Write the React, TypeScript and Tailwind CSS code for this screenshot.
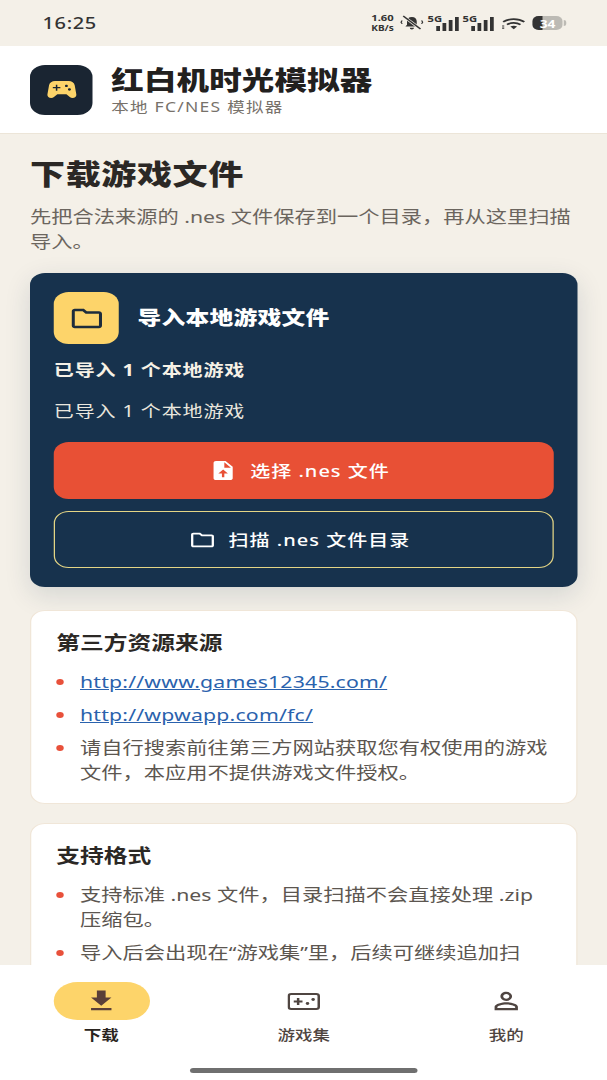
import type { ReactNode } from "react";

function Icon({ d, className }: { d: string; className: string }) {
  return (
    <svg viewBox="0 0 24 24" fill="currentColor" className={className}>
      <path d={d} />
    </svg>
  );
}

const FOLDER =
  "M20 6h-8l-2-2H4c-1.1 0-1.99.9-1.99 2L2 18c0 1.1.9 2 2 2h16c1.1 0 2-.9 2-2V8c0-1.1-.9-2-2-2zm0 12H4V6h5.17l2 2H20v10z";
const UPLOAD =
  "M14 2H6C4.9 2 4.01 2.9 4.01 4L4 20c0 1.1.89 2 1.99 2H18c1.1 0 2-.9 2-2V8L14 2zM13 15v4h-2v-4H8l4.01-4L16 15H13zM13 9V3.5L18.5 9H13z";
const DOWNLOAD = "M19 9h-4V3H9v6H5l7 7 7-7zM5 18v2h14v-2H5z";
const GAMEPAD =
  "M21.58 16.09l-1.09-7.66C20.21 6.46 18.52 5 16.53 5H7.47C5.48 5 3.79 6.46 3.51 8.43l-1.09 7.66C2.2 17.63 3.39 19 4.94 19c.68 0 1.32-.27 1.8-.75L9 16h6l2.25 2.25c.48.48 1.13.75 1.8.75 1.56 0 2.75-1.37 2.53-2.91zM11 11H9v2H8v-2H6v-1h2V8h1v2h2v1zm4-1c-.55 0-1-.45-1-1s.45-1 1-1 1 .45 1 1-.45 1-1 1zm2 3c-.55 0-1-.45-1-1s.45-1 1-1 1 .45 1 1-.45 1-1 1z";
const PERSON =
  "M12 5.9c1.16 0 2.1.94 2.1 2.1s-.94 2.1-2.1 2.1S9.9 9.16 9.9 8s.94-2.1 2.1-2.1m0 9c2.97 0 6.1 1.46 6.1 2.1v1.1H5.9V17c0-.64 3.13-2.1 6.1-2.1M12 4C9.79 4 8 5.79 8 8s1.79 4 4 4 4-1.79 4-4-1.79-4-4-4zm0 9c-2.67 0-8 1.34-8 4v3h16v-3c0-2.66-5.33-4-8-4z";

function Signal() {
  return (
    <div className="relative w-[25px] h-[15px] flex items-end justify-end gap-[2px]">
      <span className="absolute left-0 top-[-2px] text-[9px] leading-[9px] font-bold text-[#333]">5G</span>
      <span className="w-[3px] h-[5px] bg-[#333]" />
      <span className="w-[3px] h-[8px] bg-[#333]" />
      <span className="w-[3px] h-[11px] bg-[#333]" />
      <span className="w-[3px] h-[14px] bg-[#333]" />
    </div>
  );
}

function StatusBar() {
  return (
    <div className="h-[46px] bg-[#f4f0e8] flex items-center justify-between pl-[34px] pr-[33px] text-[#333]">
      <span className="text-[16px] font-medium tracking-[0.5px] leading-none">16:25</span>
      <div className="flex items-center">
        <div className="flex flex-col items-center font-bold leading-[10px] mr-[5px]">
          <span className="text-[9px]">1.60</span>
          <span className="text-[8px]">KB/s</span>
        </div>
        <svg viewBox="0 0 22 18" className="w-[19px] h-[18px] mr-[3px]" fill="#333">
          <path d="M11 2c-3 0-4.500 2.400-4.500 5v4L5 13h12l-1.500-2V7c0-2.600-1.500-5-4.500-5zM9 14.500h4a2 2 0 0 1-4 0z" />
          <path d="M3 1l16 15" stroke="#f4f0e8" strokeWidth="3" />
          <path d="M3 1l16 15" stroke="#333" strokeWidth="1.500" />
          <path d="M2 6l-1 2 1 2M20 6l1 2-1 2" fill="none" stroke="#333" strokeWidth="1.200" />
        </svg>
        <Signal />
        <div className="w-[3px]" />
        <Signal />
        <svg viewBox="0 0 26 16" className="w-[20px] h-[15px] ml-[6px]" fill="none" stroke="#333" strokeWidth="2.200">
          <path d="M2 6c6-5 16-5 22 0M6 9.500c4-3 10-3 14 0" />
          <path d="M9.500 12c2-1.300 5-1.300 7 0L13 15.500z" fill="#333" stroke="none" />
          <path d="M2 10.500v5" strokeDasharray="1.500 1.200" />
        </svg>
        <div className="relative ml-[5px] flex items-center">
          <div className="relative w-[24px] h-[14px] rounded-[5px] bg-[#bcbab4] flex items-center justify-center">
            <div className="absolute left-0 top-0 bottom-0 w-[8px] rounded-l-[5px] bg-[#333]" />
            <span className="relative text-[11px] font-bold text-white leading-none">34</span>
          </div>
          <span className="w-[2px] h-[6px] ml-[1px] rounded-r-sm bg-[#bcbab4]" />
        </div>
      </div>
    </div>
  );
}

function Bullet({ children }: { children: ReactNode }) {
  return (
    <li className="flex pl-[20px] pr-[21px]">
      <span className="w-[6px] h-[6px] rounded-full bg-[#e8503a] mt-[10px] mr-[13px] shrink-0" />
      <span className="flex-1">{children}</span>
    </li>
  );
}

function Card({ title, className, children }: { title: string; className: string; children: ReactNode }) {
  return (
    <div className={`rounded-[12px] bg-white border border-[#f0e6d8] pt-[19px] ${className}`}>
      <h2 className="px-[20px] text-[19px] leading-[26px] font-bold text-[#2b2825]">{title}</h2>
      <ul className="mt-[13px] flex flex-col gap-[8px] text-[17px] leading-[25px] text-[#5c5650]">{children}</ul>
    </div>
  );
}

function Tab({ label, active, children }: { label: string; active?: boolean; children: ReactNode }) {
  return (
    <div className="flex flex-col items-center w-[162px]">
      <div className={`w-[77px] h-[38px] rounded-full flex items-center justify-center ${active ? "bg-[#fdd46a]" : ""}`}>
        {children}
      </div>
      <span className={`mt-[5px] text-[14px] leading-[20px] ${active ? "font-bold text-[#2a2420]" : "font-medium text-[#4f4541]"}`}>
        {label}
      </span>
    </div>
  );
}

export default function App() {
  return (
    <div className="w-[607px] h-[1080px] overflow-hidden">
      {/* the whole phone screen is stretched sideways in the capture */}
      <div className="relative w-[486px] h-[1080px] origin-top-left scale-x-[1.25] overflow-hidden bg-[#f4f0e8] font-['Noto_Sans','Noto_Sans_CJK_SC',sans-serif]">
        <StatusBar />

        {/* header */}
        <div className="h-[88px] bg-white border-b border-[#ece5d8] flex items-center pl-[24px]">
          <div className="w-[50px] h-[50px] rounded-[12px] bg-[#1a2532] flex items-center justify-center">
            <Icon d={GAMEPAD} className="w-[29px] h-[29px] text-[#fdd46a]" />
          </div>
          <div className="ml-[15px]">
            <div className="text-[26px] leading-[34px] font-black tracking-[0.1px] text-[#22201e]">红白机时光模拟器</div>
            <div className="text-[14px] leading-[20px] tracking-[1px] text-[#77716a]">本地 FC/NES 模拟器</div>
          </div>
        </div>

        <div className="px-[24px] pt-[21px]">
          <h1 className="text-[28px] leading-[38px] font-black tracking-[0.5px] text-[#2b2825]">下载游戏文件</h1>
          <p className="mt-[11px] text-[17px] leading-[25px] text-[#6b655e]">
            先把合法来源的 .nes 文件保存到一个目录，再从这里扫描导入。
          </p>

          {/* import card */}
          <div className="mt-[19px] h-[314px] rounded-[12px] bg-[#17324d] px-[19px] pt-[19px] shadow-[0_8px_24px_rgba(23,50,77,0.14)]">
            <div className="flex items-center">
              <div className="w-[52px] h-[52px] rounded-[12px] bg-[#fdd46a] flex items-center justify-center">
                <Icon d={FOLDER} className="w-[29px] h-[29px] text-[#1d2c3c]" />
              </div>
              <span className="ml-[15px] text-[19px] font-black tracking-[0.2px] text-white">导入本地游戏文件</span>
            </div>
            <div className="mt-[14px] text-[16px] leading-[24px] font-bold tracking-[0.7px] text-[#f6f1e6]">已导入 1 个本地游戏</div>
            <div className="mt-[17px] text-[16px] leading-[24px] tracking-[0.7px] text-[#e9e6de]">已导入 1 个本地游戏</div>
            <button className="mt-[19px] w-full h-[57px] pr-[7px] rounded-[12px] bg-[#e85035] flex items-center justify-center text-white text-[16px] font-medium tracking-[0.8px]">
              <Icon d={UPLOAD} className="w-[23px] h-[23px] mr-[10px]" />
              选择 .nes 文件
            </button>
            <button className="mt-[12px] w-full h-[57px] pr-[7px] rounded-[12px] border border-[#e4d585] flex items-center justify-center text-white text-[16px] font-medium tracking-[0.8px]">
              <Icon d={FOLDER} className="w-[22px] h-[24px] mr-[10px]" />
              扫描 .nes 文件目录
            </button>
          </div>

          <Card title="第三方资源来源" className="mt-[23px] h-[194px]">
            <Bullet><a className="text-[#2a62ad] underline tracking-[0.15px]">http://www.games12345.com/</a></Bullet>
            <Bullet><a className="text-[#2a62ad] underline tracking-[0.15px]">http://wpwapp.com/fc/</a></Bullet>
            <Bullet>请自行搜索前往第三方网站获取您有权使用的游戏文件，本应用不提供游戏文件授权。</Bullet>
          </Card>

          <Card title="支持格式" className="mt-[19px] h-[260px]">
            <Bullet>支持标准 .nes 文件，目录扫描不会直接处理 .zip 压缩包。</Bullet>
            <Bullet>导入后会出现在“游戏集”里，后续可继续追加扫<br />描目录。</Bullet>
          </Card>
        </div>

        {/* bottom nav */}
        <div className="absolute left-0 right-0 bottom-0 h-[115px] bg-white pt-[17px]">
          <div className="flex">
            <Tab label="下载" active>
              <Icon d={DOWNLOAD} className="w-[28px] h-[28px] text-[#5a3f38]" />
            </Tab>
            <Tab label="游戏集">
              <svg viewBox="0 0 26 17" className="w-[26px] h-[17px]" fill="#4f4541">
                <rect x="1" y="1" width="24" height="15" rx="2" fill="none" stroke="#4f4541" strokeWidth="2" />
                <path d="M5 7.500h2.500V5h2v2.500H12v2H9.500V12h-2V9.500H5z" />
                <circle cx="16" cy="10.500" r="1.400" />
                <circle cx="20.500" cy="6.500" r="1.400" />
              </svg>
            </Tab>
            <Tab label="我的">
              <Icon d={PERSON} className="w-[28px] h-[28px] text-[#4f4541]" />
            </Tab>
          </div>
          <div className="absolute left-[152px] bottom-[7px] w-[182px] h-[5px] rounded-full bg-[#6f6f6f]" />
        </div>
      </div>
    </div>
  );
}
